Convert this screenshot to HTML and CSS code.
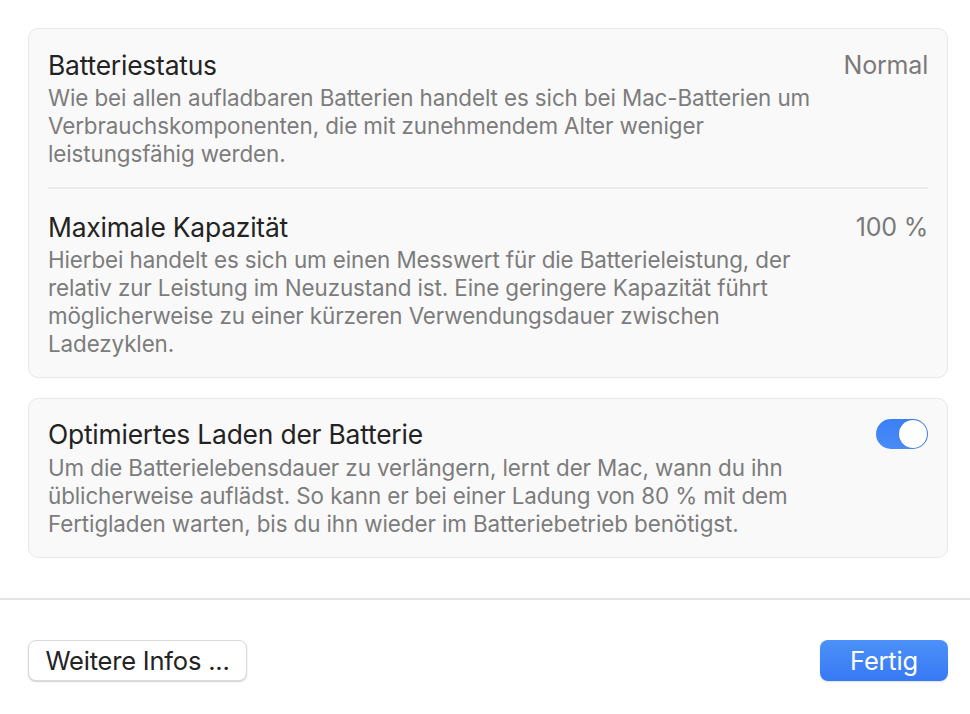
FILE: index.html
```html
<!DOCTYPE html>
<html lang="de">
<head>
<meta charset="utf-8">
<title>Batterie</title>
<link rel="stylesheet" href="styles.css">
</head>
<body>
<div class="sheet">
  <div class="content">
    <section class="card">
      <div class="row">
        <div class="row-head">
          <div class="title">Batteriestatus</div>
          <div class="value">Normal</div>
        </div>
        <p class="desc">Wie bei allen aufladbaren Batterien handelt es sich bei Mac-Batterien um Verbrauchskomponenten, die mit zunehmendem Alter weniger leistungsfähig werden.</p>
      </div>
      <div class="divider"></div>
      <div class="row">
        <div class="row-head">
          <div class="title">Maximale Kapazität</div>
          <div class="value">100 %</div>
        </div>
        <p class="desc">Hierbei handelt es sich um einen Messwert für die Batterieleistung, der relativ zur Leistung im Neuzustand ist. Eine geringere Kapazität führt möglicherweise zu einer kürzeren Verwendungsdauer zwischen Ladezyklen.</p>
      </div>
    </section>
    <section class="card">
      <div class="row row-toggle">
        <div class="row-head">
          <div class="title">Optimiertes Laden der Batterie</div>
          <div class="toggle on"><span class="knob"></span></div>
        </div>
        <p class="desc">Um die Batterielebensdauer zu verlängern, lernt der Mac, wann du ihn üblicherweise auflädst. So kann er bei einer Ladung von 80 % mit dem Fertigladen warten, bis du ihn wieder im Batteriebetrieb benötigst.</p>
      </div>
    </section>
  </div>
  <footer class="footer">
    <button class="btn btn-secondary">Weitere Infos ...</button>
    <button class="btn btn-primary">Fertig</button>
  </footer>
</div>
</body>
</html>
```
FILE: styles.css
```css
* { box-sizing: border-box; }
html, body {
  margin: 0;
  padding: 0;
  background: #ffffff;
}
body {
  font-family: Inter, "Noto Sans", "Liberation Sans", sans-serif;
  color: #232323;
  width: 970px;
  height: 714px;
  overflow: hidden;
}
.sheet {
  display: flex;
  flex-direction: column;
}
.content {
  padding: 28px 22px 0 28px;
  display: flex;
  flex-direction: column;
  gap: 20px;
}
.card {
  background: #f9f9f9;
  border: 1px solid #e8e8e8;
  border-radius: 10px;
  padding: 0 19px;
}
.row {
  padding: 22px 0 19px;
}
.divider + .row {
  padding-top: 24px;
}
.row-toggle {
  padding-top: 20px;
}
.row-head {
  display: flex;
  justify-content: space-between;
  align-items: center;
}
.title {
  font-size: 26.4px;
  line-height: 28px;
  color: #232323;
  letter-spacing: -0.2px;
}
.value {
  font-size: 25px;
  line-height: 28px;
  color: #7a7a7a;
  letter-spacing: -0.2px;
}
.desc {
  margin: 5px 0 0;
  font-size: 22.4px;
  line-height: 28px;
  color: #7c7c7c;
  max-width: 790px;
  letter-spacing: -0.1px;
}
.divider {
  height: 2px;
  background: #ececec;
}
.toggle {
  width: 52px;
  height: 30px;
  border-radius: 15px;
  background: linear-gradient(#3b7ff5, #4a8bf6);
  display: flex;
  align-items: center;
  justify-content: flex-end;
  padding: 1px;
}
.knob {
  width: 28px;
  height: 28px;
  border-radius: 50%;
  background: #ffffff;
  box-shadow: 0 0 0 0.5px rgba(0,0,0,0.15);
}
.footer {
  margin-top: 40px;
  border-top: 2px solid #e4e4e4;
  padding: 40px 22px 0 28px;
  display: flex;
  justify-content: space-between;
}
.btn {
  font-family: inherit;
  font-size: 25.5px;
  height: 41px;
  border-radius: 8px;
  padding: 0;
  cursor: default;
  letter-spacing: -0.2px;
}
.btn-secondary {
  background: #ffffff;
  color: #232323;
  border: 1px solid #dadada;
  box-shadow: 0 1px 1.5px rgba(0,0,0,0.18);
  width: 219px;
}
.btn-primary {
  background: linear-gradient(#4c90f8, #3679f5);
  color: #ffffff;
  border: none;
  width: 128px;
  box-shadow: 0 1px 1.5px rgba(0,0,0,0.12);
}
```
